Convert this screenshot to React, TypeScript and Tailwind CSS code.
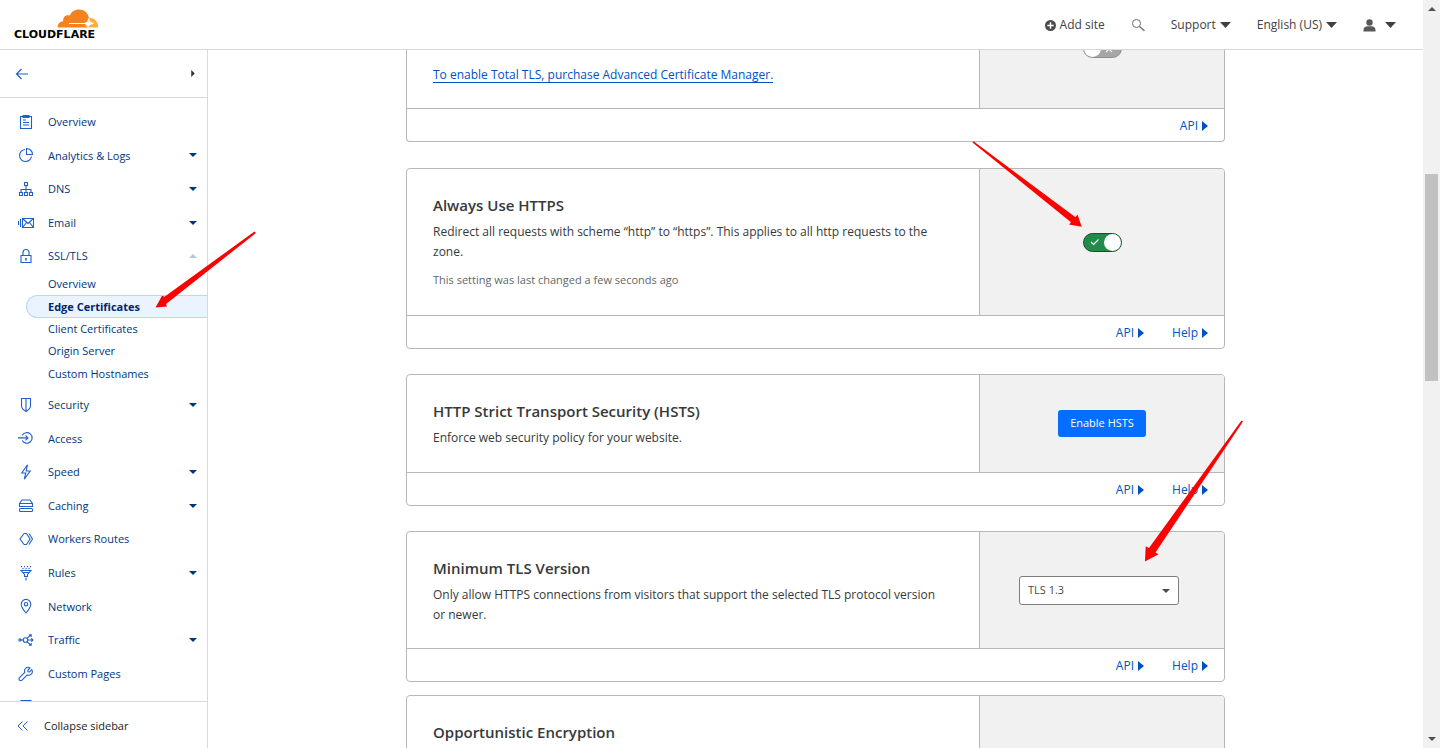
import React, { useState } from "react";

type IconName =
  | "overview" | "analytics" | "dns" | "email" | "lock" | "shield" | "access" | "speed"
  | "caching" | "workers" | "rules" | "network" | "traffic" | "wrench" | "apps";

const iconShapes: Record<IconName, React.ReactNode> = {
  overview: (
    <>
      <path d="M2.500 2.500h11v12h-11z" />
      <path d="M5 1.500h6v2H5zM5 6h3M5 8.500h6M5 11h6" />
    </>
  ),
  analytics: (
    <>
      <path d="M7 2.500a6 6 0 1 0 6.500 7" />
      <path d="M8.500 1.500v6h6a6 6 0 0 0-6-6z" />
    </>
  ),
  dns: (
    <>
      <path d="M6.500 1.500h3v3h-3zM1.500 11.500h3v3h-3zM6.500 11.500h3v3h-3zM11.500 11.500h3v3h-3z" />
      <path d="M8 4.500v7M3 11.500V8.500h10v3" />
    </>
  ),
  email: (
    <>
      <path d="M4.500 3.500h11v9h-11zM4.500 3.500l5.500 5 5.500-5M4.500 12.500l4-5M15.500 12.500l-4-5" />
      <path d="M2.500 4v8M.5 6v4" />
    </>
  ),
  lock: (
    <>
      <path d="M3 7.500h10v7H3zM5 7.500v-3a3 3 0 0 1 6 0v3" />
      <path d="M8 10v2.500" strokeWidth="1.600" />
    </>
  ),
  shield: <path d="M3.500 1.500h9v7.500c0 2.500-2 4-4.500 5.500-2.500-1.500-4.500-3-4.500-5.500zM8 1.500v13" />,
  access: (
    <>
      <path d="M4.200 5.300a5.300 5.300 0 1 1 0 5.200" />
      <path d="M0 7.900h10M7.500 5.400 10 7.900 7.500 10.400" />
    </>
  ),
  speed: <path d="M9.500.8 3.800 9h4l-1.500 6.200L12.200 7h-4z" />,
  caching: (
    <>
      <path d="M1.500 5.500 4 2h8l2.500 3.500M1.500 5.500h13v3h-13z" />
      <rect x="1.500" y="10.500" width="13" height="3" rx="1" />
    </>
  ),
  workers: (
    <path d="M6 2.500 2 8l4 5.500M6 2.500h2.500L12 8l-3.500 5.500H6M11 2.500 14.500 8 11 13.500" />
  ),
  rules: (
    <>
      <path d="M3 5.500h10L9.500 9.500v2h-3v-2zM5.500 7.500h5M8 12.500V15.500" />
      <path d="M3.500 1v1.200M6.500 1v1.200M9.500 1v1.200M12.500 1v1.200M5 3v1.200M8 3v1.200M11 3v1.200" />
    </>
  ),
  network: (
    <>
      <path d="M8 15C5 11.500 3.200 9 3.200 6.200a4.800 4.800 0 0 1 9.600 0C12.800 9 11 11.500 8 15z" />
      <circle cx="8" cy="6.200" r="1.700" />
    </>
  ),
  traffic: (
    <>
      <circle cx="7.500" cy="8" r="2.300" />
      <circle cx="2" cy="8" r="1.100" />
      <path d="M3 8h2M9.800 8H15M9.200 6.200 12.800 3M9.200 9.800l3.600 3.200M13.300 6.300 15 8l-1.700 1.700M10.800 2.700h2.400v2.400M10.800 13.300h2.400v-2.400" />
    </>
  ),
  wrench: (
    <path d="M13.800 3.700 11.500 6 10 5.700 9.800 4.300 12 2C10.500 1 8.500 1.300 7.400 2.500 6.500 3.500 6.300 5 6.800 6.300L1.500 11.600c-.7.700-.7 1.800 0 2.500s1.800.7 2.500 0L9.300 8.900c1.300.5 2.900.3 3.900-.7 1.200-1.200 1.500-3 .6-4.500z" />
  ),
  apps: <path d="M3 1.500h10v12H3z" />,
};

function NavIcon({ name }: { name: IconName }) {
  return (
    <svg viewBox="0 0 16 16" className="size-4 shrink-0" fill="none" stroke="#1f60cb" strokeWidth="1.100" aria-hidden="true">
      {iconShapes[name]}
    </svg>
  );
}

function Caret({ className }: { className: string }) {
  return (
    <svg viewBox="0 0 10 6" preserveAspectRatio="none" className={className} fill="currentColor" aria-hidden="true">
      <path d="M0 0h10L5 6z" />
    </svg>
  );
}

type Item = { label: string; icon: IconName; menu?: "closed" | "open" };

const upperItems: Item[] = [
  { label: "Overview", icon: "overview" },
  { label: "Analytics & Logs", icon: "analytics", menu: "closed" },
  { label: "DNS", icon: "dns", menu: "closed" },
  { label: "Email", icon: "email", menu: "closed" },
  { label: "SSL/TLS", icon: "lock", menu: "open" },
];

const sslItems = ["Overview", "Edge Certificates", "Client Certificates", "Origin Server", "Custom Hostnames"];

const lowerItems: Item[] = [
  { label: "Security", icon: "shield", menu: "closed" },
  { label: "Access", icon: "access" },
  { label: "Speed", icon: "speed", menu: "closed" },
  { label: "Caching", icon: "caching", menu: "closed" },
  { label: "Workers Routes", icon: "workers" },
  { label: "Rules", icon: "rules", menu: "closed" },
  { label: "Network", icon: "network" },
  { label: "Traffic", icon: "traffic", menu: "closed" },
  { label: "Custom Pages", icon: "wrench" },
  { label: "", icon: "apps" },
];

function NavItem({ item }: { item: Item }) {
  return (
    <a href="#" className="flex items-center pr-[10px] pl-[18px] text-[#003681]">
      <NavIcon name={item.icon} />
      <span className="ml-[14px] flex-1 pt-px">{item.label}</span>
      {item.menu === "closed" && <Caret className="h-1 w-2" />}
      {item.menu === "open" && <Caret className="h-1 w-2 rotate-180 text-[#b9c6da]" />}
    </a>
  );
}

function Logo() {
  return (
    <a href="#" aria-label="Cloudflare home">
      <svg width="88" height="32" viewBox="0 0 88 32" aria-hidden="true">
        <path
          fill="#f6821f"
          d="M43.700 18.500c-.2-3.600 2-6 5.600-6.300C48.500 8.300 51.800 5.200 55.800 6.600 57.200 2.800 60.600.5 65 .5c5 0 8.700 3 9.800 7.700l-.3 5.300-1 5z"
        />
        <path fill="#fbad41" d="M74.600 8.700c5.400-.3 9.700 3.600 9.600 9.800H70.500z" />
        <path stroke="#fff" strokeWidth="1" fill="none" d="M55 14.500h17" />
        <path fill="#fff" d="m75 8.800 1.300 4 4 1.700-4.300 1.500-2.300 3-1-3-3.500-1.500 3.500-1.500z" />
        <text x="0" y="29" fontSize="11" fontWeight="700" fontFamily="'DejaVu Sans', sans-serif" fill="#000">
          CLOUDFLARE
        </text>
      </svg>
    </a>
  );
}

function Header() {
  return (
    <header className="flex h-[50px] shrink-0 items-center justify-between border-b border-[#d9d9d9] pr-[27px] pl-[14px] text-[12px] text-[#404242]">
      <Logo />
      <nav className="flex items-center gap-[26px] pt-px">
        <button className="flex items-center gap-1">
          <svg viewBox="0 0 12 12" className="size-[11px]" aria-hidden="true">
            <circle cx="6" cy="6" r="6" fill="#4a4a4a" />
            <path d="M6 2.500v7M2.500 6h7" stroke="#fff" strokeWidth="1.600" />
          </svg>
          Add site
        </button>
        <button aria-label="Search">
          <svg viewBox="0 0 14 14" className="size-[14px]" fill="none" stroke="#6b6b6b" aria-hidden="true">
            <circle cx="5.500" cy="5.500" r="4" />
            <path d="M8.500 8.500 13.500 12.800" strokeWidth="1.300" />
          </svg>
        </button>
        <button className="flex items-center gap-1">
          Support
          <Caret className="h-1.5 w-[11px]" />
        </button>
        <button className="flex items-center gap-1">
          English (US)
          <Caret className="h-1.5 w-[11px]" />
        </button>
        <button className="flex items-center gap-[9px]" aria-label="Account">
          <svg viewBox="0 0 13 13" className="size-[13px]" fill="#595959" aria-hidden="true">
            <circle cx="6.500" cy="3.500" r="3.200" />
            <path d="M.5 12.500V11c0-2.500 2-3.700 4-3.700h4c2 0 4 1.200 4 3.700v1.500z" />
          </svg>
          <Caret className="h-1.5 w-[11px]" />
        </button>
      </nav>
    </header>
  );
}

function Sidebar() {
  return (
    <aside className="flex w-[208px] shrink-0 flex-col border-r border-[#d9d9d9] text-[11px]">
      <div className="flex h-[48px] shrink-0 items-center justify-between border-b border-[#d9d9d9] pr-3 pl-[15px]">
        <button aria-label="Back">
          <svg viewBox="0 0 14 12" className="h-3 w-[14px]" fill="none" stroke="#1f60cb" strokeWidth="1.200" aria-hidden="true">
            <path d="M13 6H1.500M6.500 1l-5 5 5 5" />
          </svg>
        </button>
        <button aria-label="Expand" className="text-[#313131]">
          <svg viewBox="0 0 4 8" className="h-[7px] w-1" fill="currentColor" aria-hidden="true">
            <path d="M0 0v8l4-4z" />
          </svg>
        </button>
      </div>
      <nav className="min-h-0 flex-1 overflow-hidden pt-[7px]">
        <div className="grid h-[168px] grid-rows-5">
          {upperItems.map((item) => (
            <NavItem key={item.label} item={item} />
          ))}
        </div>
        <div className="grid h-[112px] grid-rows-5 pl-[26px] text-[#003681]">
          {sslItems.map((label) =>
            label === "Edge Certificates" ? (
              <a
                key={label}
                href="#"
                aria-current="page"
                className="flex items-center rounded-l-full border border-r-0 border-[#b9d6ff] bg-[#ebf3ff] pt-px pl-[21px] font-bold text-[#00276b]"
              >
                {label}
              </a>
            ) : (
              <a key={label} href="#" className="flex items-center pl-[22px]">
                {label}
              </a>
            ),
          )}
        </div>
        <div className="mt-[3px] grid h-[336px] grid-rows-10">
          {lowerItems.map((item) => (
            <NavItem key={item.icon} item={item} />
          ))}
        </div>
      </nav>
      <button className="flex h-[47px] shrink-0 items-center gap-[15px] border-t border-[#d9d9d9] pt-0.5 pl-[17px] text-[#222]">
        <svg viewBox="0 0 12 10" className="h-2.5 w-3" fill="none" stroke="#1f60cb" aria-hidden="true">
          <path d="M5.500.5 1 5l4.500 4.500M10.500.5 6 5l4.500 4.500" />
        </svg>
        Collapse sidebar
      </button>
    </aside>
  );
}

function Toggle({ label, initial }: { label: string; initial: boolean }) {
  const [on, setOn] = useState(initial);
  return (
    <label
      className={
        on
          ? "relative flex h-[19px] w-[39px] items-center justify-between rounded-full border border-[#174f2b] bg-[#228b49] pl-[6px]"
          : "relative flex h-[19px] w-[39px] flex-row-reverse items-center justify-between rounded-full border border-[#8d8d8d] bg-[#a6a6a6] pr-[7px]"
      }
    >
      <input
        type="checkbox"
        role="switch"
        aria-label={label}
        checked={on}
        onChange={() => setOn(!on)}
        className="absolute inset-0 appearance-none"
      />
      <svg viewBox="0 0 10 8" className="h-2 w-2.5" fill="none" stroke="#fff" strokeWidth="1.100" aria-hidden="true">
        {on ? <path d="M1 4 3.500 6.500 8.500 1.500" /> : <path d="m2 1 6 6M8 1 2 7" />}
      </svg>
      <span className="size-[17px] rounded-full bg-white" />
    </label>
  );
}

function FooterLink({ children }: { children: string }) {
  return (
    <a href="#" className="flex items-center gap-1">
      {children}
      <svg viewBox="0 0 6 10" className="h-2.5 w-1.5" fill="currentColor" aria-hidden="true">
        <path d="M0 0v10l6-5z" />
      </svg>
    </a>
  );
}

type CardProps = {
  title: string;
  children?: React.ReactNode;
  control?: React.ReactNode;
  links?: string[];
  className: string;
};

function Card({ title, children, control, links, className }: CardProps) {
  return (
    <section className={`shrink-0 overflow-hidden rounded border border-[#b6b7b7] ${className}`}>
      <div className="grid min-h-[97px] grid-cols-[1fr_245px]">
        <div className="pt-6 pr-[32px] pb-[23px] pl-[26px] text-[12px] leading-5 text-[#36393a]">
          <h2 className="mb-[5px] text-[15px] leading-6 font-semibold text-[#36393a]">{title}</h2>
          {children}
        </div>
        <div className="flex items-center justify-center border-l border-[#b6b7b7] bg-[#f1f1f1]">{control}</div>
      </div>
      {links && (
        <footer className="flex h-[33px] items-center justify-end gap-[28px] border-t border-[#b6b7b7] pt-0.5 pr-4 text-[12px] text-[#0051c3]">
          {links.map((link) => (
            <FooterLink key={link}>{link}</FooterLink>
          ))}
        </footer>
      )}
    </section>
  );
}

function Arrows() {
  return (
    <svg className="pointer-events-none absolute top-0 left-0" width="1423" height="748" fill="#fe0000" aria-hidden="true">
      <path d="M254.500 231.500 164.500 296.800 162 295.700 155.500 307.500 167 306.500 166 304 256 233z" />
      <path d="M972.500 142.500 973.500 141.300 1075.500 217.300 1077.500 214.500 1081.700 226.700 1069 224.500 1071 222.300z" />
      <path d="M1241.500 420.500 1243 421.500 1155.500 552.500 1158.500 554.300 1145 561.500 1145.700 546.300 1149 548z" />
    </svg>
  );
}

export default function App() {
  return (
    <div className="relative flex h-screen overflow-hidden bg-white font-['Open_Sans','Noto_Sans',sans-serif]">
      <div className="flex min-w-0 flex-1 flex-col">
        <Header />
        <div className="flex min-h-0 flex-1">
          <Sidebar />
          <main className="flex min-w-0 flex-1 flex-col items-center overflow-hidden">
            <div className="flex w-full max-w-[819px] flex-col">
              <section className="overflow-hidden rounded-b border border-t-0 border-[#b6b7b7]">
                <div className="grid h-[58px] grid-cols-[1fr_245px]">
                  <div className="px-[26px] pt-[17px] text-[12px] leading-[15px]">
                    <a href="#" className="inline-block border-b border-[#0051c3] text-[#0051c3]">
                      To enable Total TLS, purchase Advanced Certificate Manager.
                    </a>
                  </div>
                  <div className="flex items-start justify-center border-l border-[#b6b7b7] bg-[#f1f1f1]">
                    <div className="-mt-[11px]">
                      <Toggle label="Total TLS" initial={false} />
                    </div>
                  </div>
                </div>
                <footer className="flex h-[33px] items-center justify-end border-t border-[#b6b7b7] pt-0.5 pr-4 text-[12px] text-[#0051c3]">
                  <FooterLink>API</FooterLink>
                </footer>
              </section>

              <Card
                title="Always Use HTTPS"
                links={["API", "Help"]}
                className="mt-[26px]"
                control={<Toggle label="Always Use HTTPS" initial={true} />}
              >
                <p>
                  Redirect all requests with scheme “http” to “https”. This applies to all http requests to the zone.
                </p>
                <p className="pt-2 pb-0.5 text-[11px] text-[#62676a]">
                  This setting was last changed a few seconds ago
                </p>
              </Card>

              <Card
                title="HTTP Strict Transport Security (HSTS)"
                links={["API", "Help"]}
                className="mt-[25px]"
                control={
                  <button className="h-[27px] rounded-[3px] bg-[#056dff] px-3 text-[11px] font-medium text-white">
                    Enable HSTS
                  </button>
                }
              >
                <p>Enforce web security policy for your website.</p>
              </Card>

              <Card
                title="Minimum TLS Version"
                links={["API", "Help"]}
                className="mt-[25px]"
                control={
                  <div className="relative mr-1.5">
                    <select
                      aria-label="Minimum TLS Version"
                      defaultValue="TLS 1.3"
                      className="h-[29px] w-[160px] appearance-none rounded-[3px] border border-[#7d7d7d] bg-white pl-2 text-[11px] text-[#4a4a4a]"
                    >
                      <option>TLS 1.0</option>
                      <option>TLS 1.1</option>
                      <option>TLS 1.2</option>
                      <option>TLS 1.3</option>
                    </select>
                    <Caret className="pointer-events-none absolute top-[13px] right-[9px] h-1 w-2 text-[#4a4a4a]" />
                  </div>
                }
              >
                <p>
                  Only allow HTTPS connections from visitors that support the selected TLS protocol version or newer.
                </p>
              </Card>

              <Card title="Opportunistic Encryption" className="mt-[13px]" />
            </div>
          </main>
        </div>
      </div>
      <div className="flex w-[17px] shrink-0 flex-col items-center justify-between bg-[#f1f1f1] py-[7px] text-[#505050]" aria-hidden="true">
        <Caret className="h-1 w-2 rotate-180" />
        <div className="mt-[163px] mb-auto h-[207px] w-[13px] bg-[#c1c1c1]" />
        <Caret className="h-1 w-2" />
      </div>
      <Arrows />
    </div>
  );
}
